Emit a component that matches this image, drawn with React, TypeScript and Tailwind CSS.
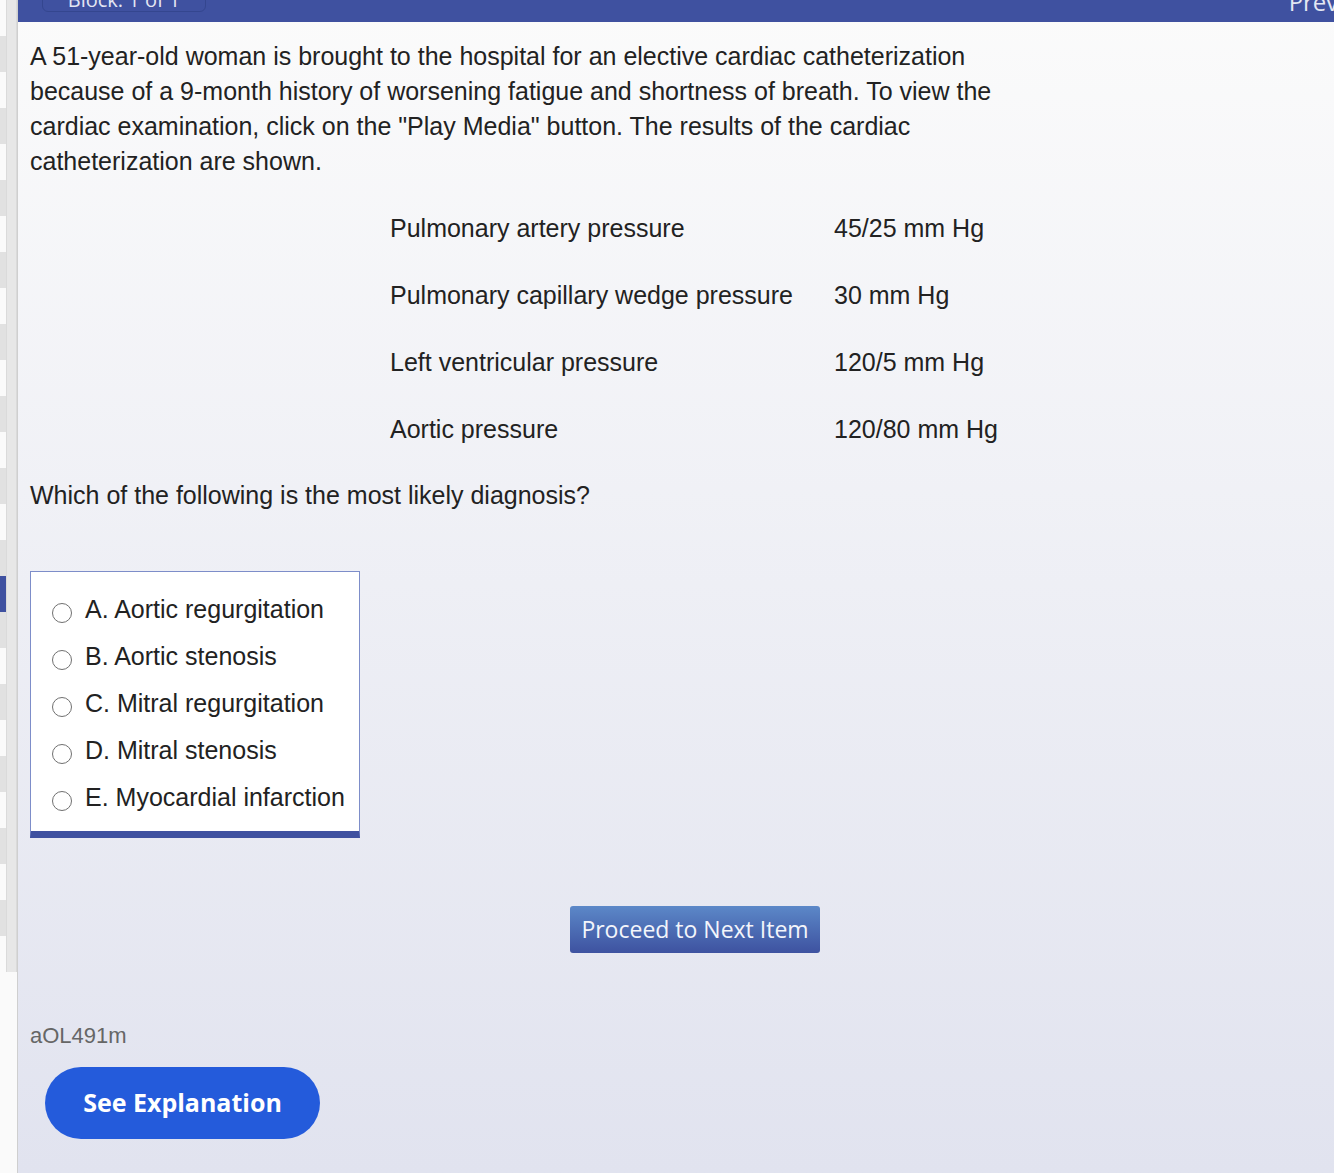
const rows = [
  ["Pulmonary artery pressure", "45/25 mm Hg"],
  ["Pulmonary capillary wedge pressure", "30 mm Hg"],
  ["Left ventricular pressure", "120/5 mm Hg"],
  ["Aortic pressure", "120/80 mm Hg"],
];

const options = [
  "A. Aortic regurgitation",
  "B. Aortic stenosis",
  "C. Mitral regurgitation",
  "D. Mitral stenosis",
  "E. Myocardial infarction",
];

function Sidebar() {
  return (
    <div className="flex h-full w-[18px] shrink-0 border-r border-[#cfcfcf] bg-[#fafafa]">
      <div className="flex w-[6px] flex-col">
        {Array.from({ length: 27 }).map((_, i) => (
          <div
            key={i}
            className={
              i === 16
                ? "h-[36px] bg-[#3f51a0]"
                : i % 2 === 1
                  ? "h-[36px] bg-[#e1e1e1]"
                  : "h-[36px] bg-[#fafafa]"
            }
          />
        ))}
      </div>
      <div className="h-[972px] w-[11px] border-x border-[#dadada] bg-[#e7e7e7]" />
    </div>
  );
}

export default function App() {
  return (
    <div
      className="flex h-[1173px] w-[1334px] overflow-hidden text-[#222]"
      style={{ fontFamily: '"Liberation Sans", Arial, sans-serif' }}
    >
      <Sidebar />
      <main className="flex min-w-0 flex-1 flex-col overflow-hidden bg-linear-to-b from-[#fbfbfb] to-[#e1e3ef]">
        <header className="flex h-[22px] shrink-0 items-start justify-between overflow-hidden bg-[#3f51a0]">
          <div
            className="-mt-[12px] ml-[24px] flex h-[24px] w-[164px] items-center justify-center rounded-b-md border border-[#34468f] text-[20px] text-[#e3e7f3]"
            style={{ fontFamily: '"Open Sans", sans-serif' }}
          >
            Block: 1 of 1
          </div>
          <div
            className="-mt-[16px] -mr-[51px] text-[24px] whitespace-nowrap text-[#e3e7f3]"
            style={{ fontFamily: '"Open Sans", sans-serif' }}
          >
            Previous
          </div>
        </header>

        <div className="flex flex-col px-[12px] pt-[17px]">
          <p className="w-[1000px] text-[25px] leading-[35px]">
            A 51-year-old woman is brought to the hospital for an elective cardiac catheterization
            because of a 9-month history of worsening fatigue and shortness of breath. To view the
            cardiac examination, click on the "Play Media" button. The results of the cardiac
            catheterization are shown.
          </p>

          <div className="mt-[32px] ml-[360px] grid grid-cols-[444px_auto] gap-y-[32px] text-[25px] leading-[35px]">
            {rows.map(([label, value]) => (
              <div key={label} className="contents">
                <div>{label}</div>
                <div>{value}</div>
              </div>
            ))}
          </div>

          <p className="mt-[31px] text-[25px] leading-[35px]">
            Which of the following is the most likely diagnosis?
          </p>

          <div className="mt-[58px] flex w-[330px] flex-col gap-[12px] border border-b-[7px] border-[#7d8dc9] border-b-[#3f51a0] bg-white pt-[20px] pb-[16px] pl-[21px]">
            {options.map((o) => (
              <label key={o} className="flex h-[35px] items-center gap-[13px] text-[25px] whitespace-nowrap">
                <span className="mt-[6px] h-[20px] w-[20px] shrink-0 rounded-full border-[1.5px] border-[#707070] bg-white" />
                <span>{o}</span>
              </label>
            ))}
          </div>

          <div className="mt-[68px] ml-[540px]">
            <button
              className="flex h-[47px] w-[250px] items-center justify-center rounded-[3px] bg-linear-to-b from-[#5c88c8] to-[#3e52a0] text-[23px] text-[#f3f5fb]"
              style={{ fontFamily: '"Open Sans", sans-serif' }}
            >
              Proceed to Next Item
            </button>
          </div>

          <div className="mt-[66px] text-[22px] text-[#666]">aOL491m</div>

          <div className="mt-[15px] ml-[15px]">
            <button
              className="flex h-[72px] w-[275px] items-center justify-center rounded-full bg-[#245bdb] text-[25px] font-bold text-white"
              style={{ fontFamily: '"Open Sans", sans-serif' }}
            >
              See Explanation
            </button>
          </div>
        </div>
      </main>
    </div>
  );
}
